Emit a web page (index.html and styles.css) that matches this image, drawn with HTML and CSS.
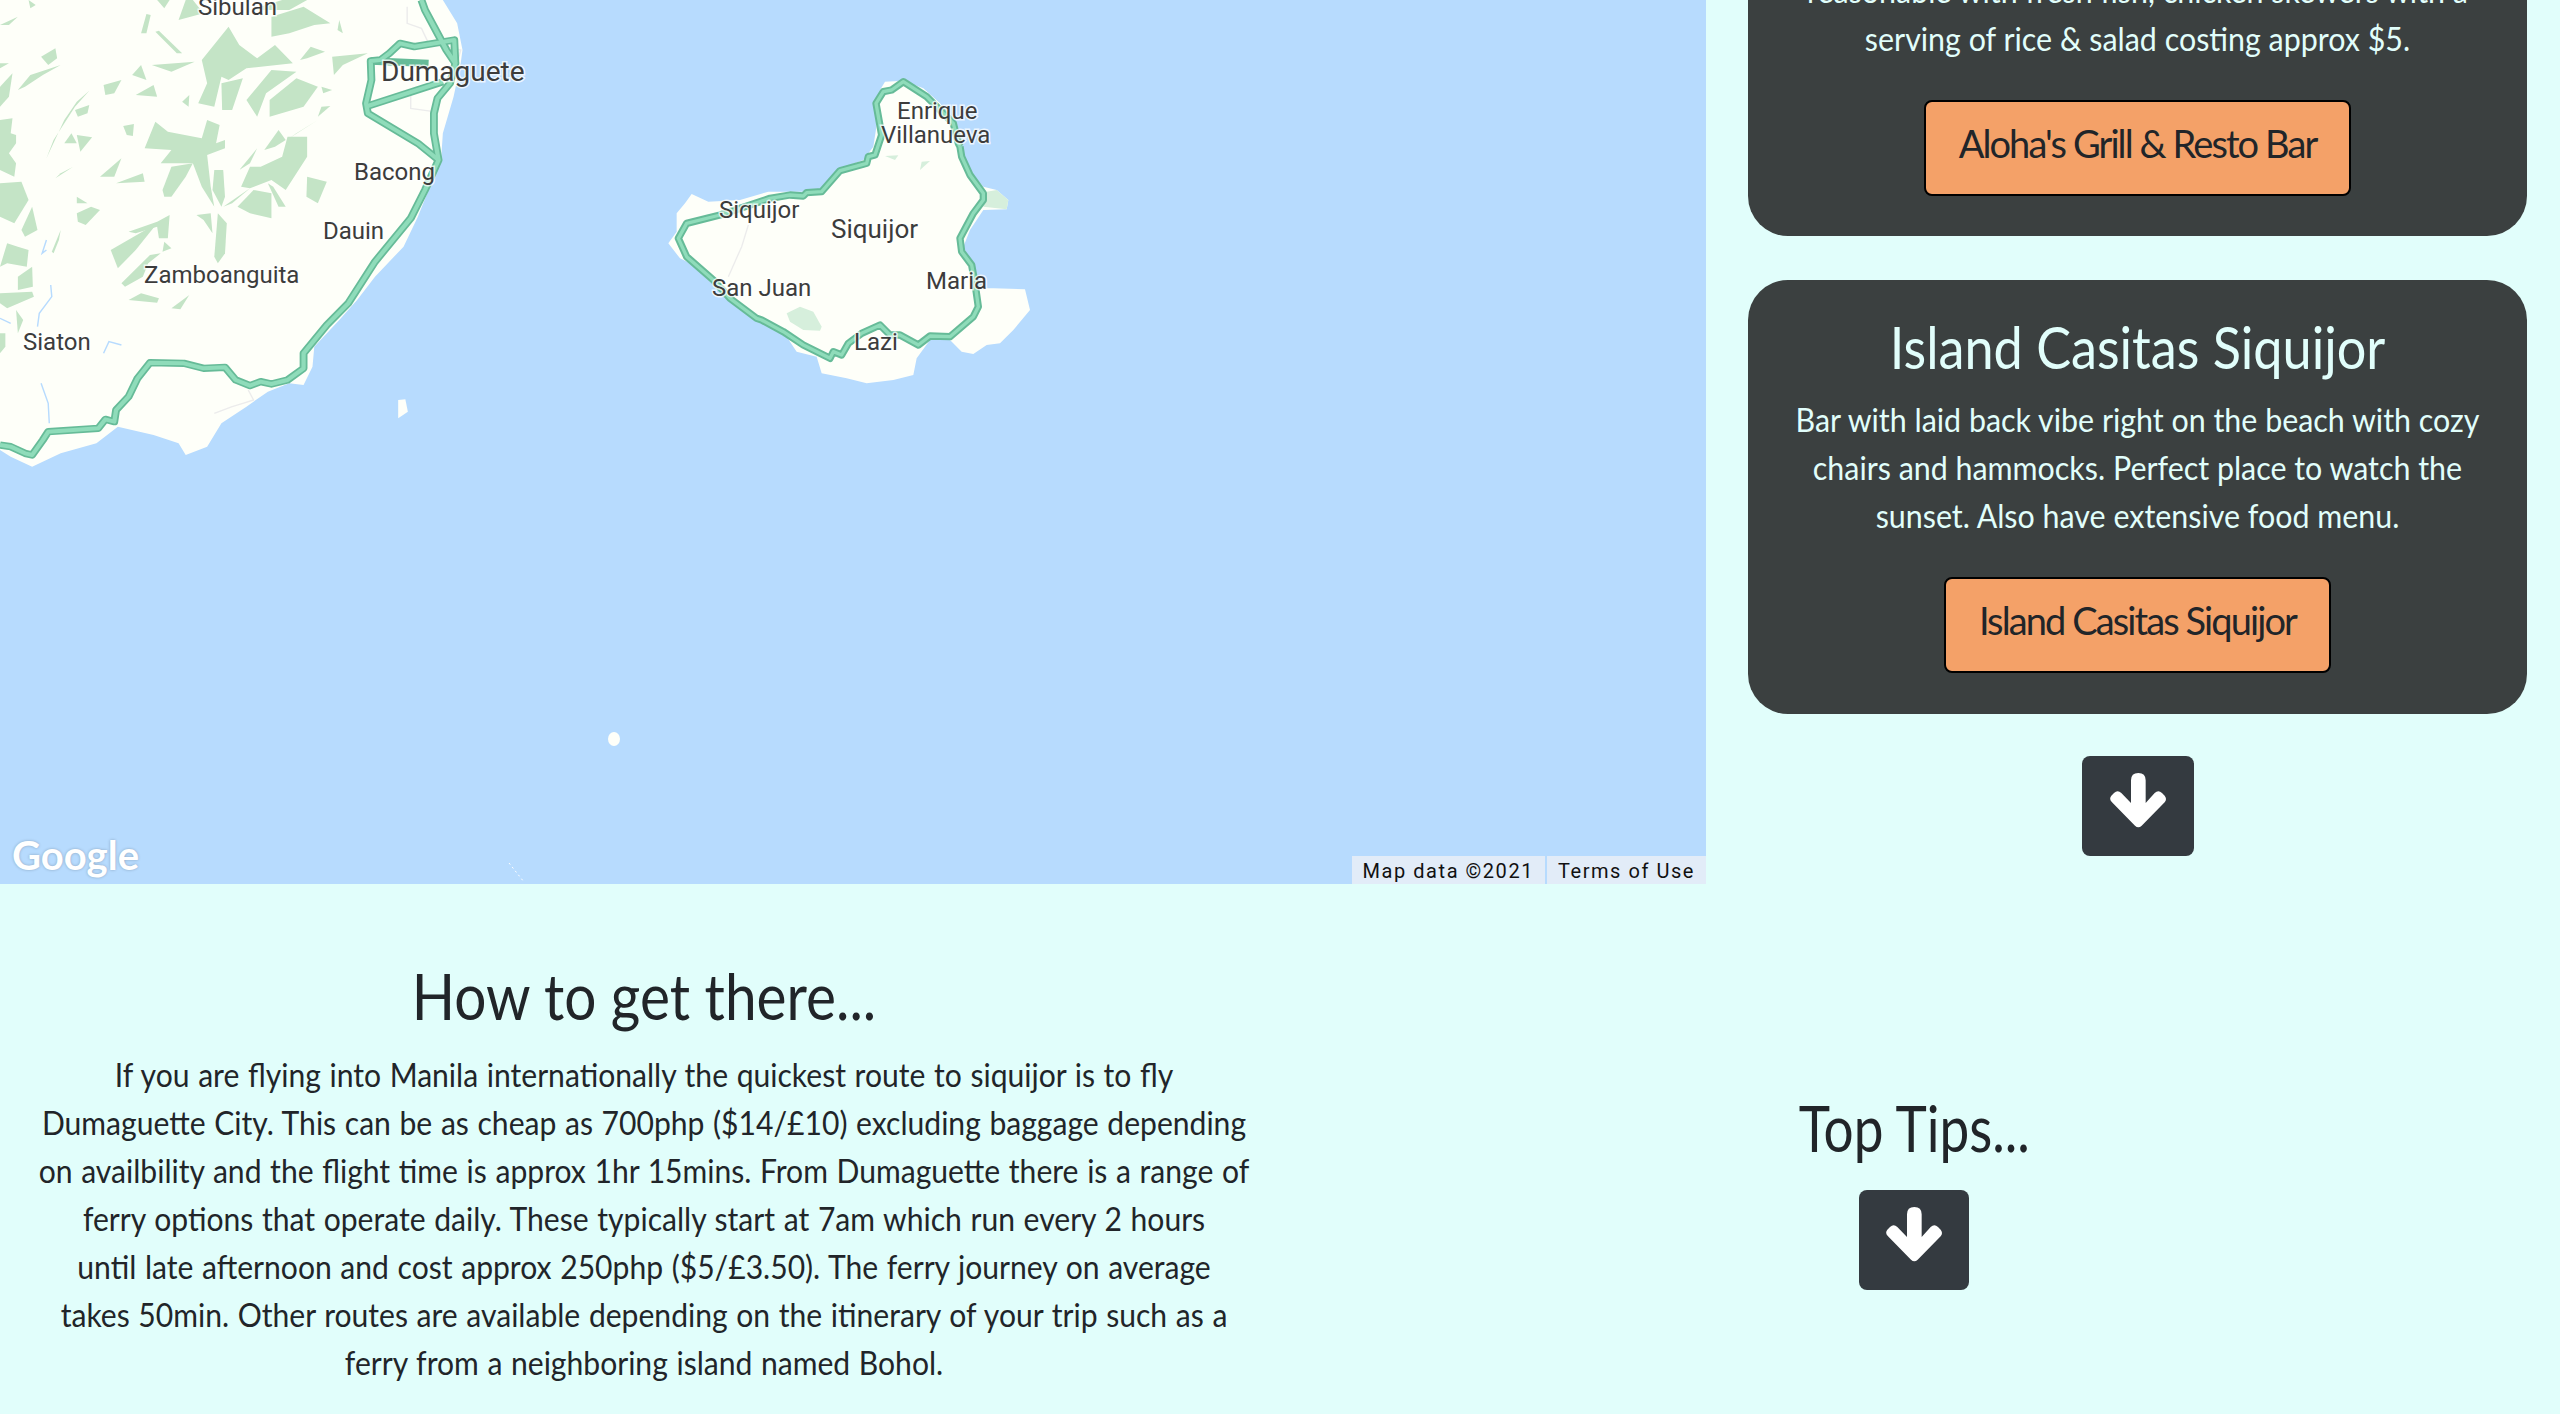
FILE: index.html
```html
<!DOCTYPE html>
<html lang="en">
<head>
    <meta charset="UTF-8">
    <meta name="viewport" content="width=device-width, initial-scale=1.0">
    <title>Siquijor</title>
    <link rel="stylesheet" href="styles.css">
</head>
<body>
    <div class="page">
        <div class="top-row">
            <div class="map">
                <svg class="map-svg" width="1706" height="884" viewBox="0 0 1706 884">
                    <rect width="1706" height="884" fill="#b7dbfe"/>
                    <!-- negros coast -->
                    <g transform="scale(0.35714 0.33333)">
                        <polygon class="land" points="0,0 1240,0 1280,70 1295,150 1290,190 1270,290 1240,400 1235,480 1200,570 1170,650 1130,740 1050,830 1000,900 950,960 880,1040 875,1100 850,1155 810,1150 750,1175 690,1220 620,1270 580,1340 520,1365 500,1330 550,1295 500,1330 430,1305 330,1280 270,1330 170,1360 90,1400 30,1370 0,1350"/>
                        <polygon class="land" points="1115,1200 1135,1198 1142,1235 1115,1255"/>
                        <g class="forest">
                            <polygon points="395,100 410,42 422,45 410,100"/>
                            <polygon points="115,170 155,145 160,175 135,195"/>
                            <polygon points="50,270 85,225 170,195 120,225 70,260"/>
                            <polygon points="435,95 445,92 510,160 495,160"/>
                            <polygon points="0,75 50,50 25,75"/>
                            <polygon points="80,0 100,15 85,25"/>
                            <polygon points="440,0 475,0 460,25"/>
                            <polygon points="500,60 520,0 540,0 570,40"/>
                            <polygon points="700,30 790,0 860,0 810,30"/>
                            <polygon points="760,50 850,20 925,70 880,75 810,100 760,110"/>
                            <polygon points="565,180 640,80 670,135 720,175 770,135 820,190 690,205 640,240 620,230 600,320 555,310 580,250"/>
                            <polygon points="840,180 870,140 910,155 860,175"/>
                            <polygon points="950,60 960,100 945,90"/>
                            <polygon points="930,170 1030,160 960,195 935,225"/>
                            <polygon points="290,255 340,240 320,280 295,285"/>
                            <polygon points="370,225 395,195 410,240"/>
                            <polygon points="380,285 430,255 440,290"/>
                            <polygon points="425,195 545,185 480,215"/>
                            <polygon points="510,305 530,285 528,320"/>
                            <polygon points="620,250 680,235 650,330 622,330"/>
                            <polygon points="690,300 760,210 830,215 745,280 720,350"/>
                            <polygon points="755,300 830,235 890,260 850,320 755,350"/>
                            <polygon points="900,260 930,270 905,280"/>
                            <polygon points="890,350 925,318 900,320"/>
                            <polygon points="345,378 375,372 372,408 355,405"/>
                            <polygon points="130,475 180,360 215,305 250,272 210,320 150,420"/>
                            <polygon points="210,330 250,315 245,340 218,350"/>
                            <polygon points="180,430 200,400 215,430"/>
                            <polygon points="215,405 258,412 225,455"/>
                            <polygon points="405,445 435,365 470,395 565,415 580,360 615,375 605,430 630,420 630,445 580,465 590,560 600,620 565,560 540,490 450,490 480,450"/>
                            <polygon points="455,570 480,500 540,490 520,530 480,590 460,590"/>
                            <polygon points="280,530 340,475 320,530"/>
                            <polygon points="155,535 205,500 170,520"/>
                            <polygon points="325,550 400,520 405,545"/>
                            <polygon points="805,410 860,410 860,470 800,570 760,540 700,565 675,560 700,500 730,500 790,470"/>
                            <polygon points="740,450 780,390 800,420 770,440"/>
                            <polygon points="810,415 890,360 830,400"/>
                            <polygon points="670,510 720,445 700,490"/>
                            <polygon points="860,530 915,545 890,610 858,590"/>
                            <polygon points="665,620 710,570 760,580 760,655 700,640"/>
                            <polygon points="765,560 800,620 780,620 750,550"/>
                            <polygon points="600,510 625,510 630,590 620,620 595,570"/>
                            <polygon points="625,620 700,565 650,610"/>
                            <polygon points="550,645 590,640 595,700 570,660"/>
                            <polygon points="610,640 635,670 630,760 610,790 600,770"/>
                            <polygon points="215,590 245,610 215,610"/>
                            <polygon points="215,640 255,620 280,630 240,675 218,665"/>
                            <polygon points="360,695 440,665 475,645 470,715 445,715 440,680 380,700"/>
                            <polygon points="310,750 440,670 380,750 330,805"/>
                            <polygon points="145,755 170,690 165,720 150,760"/>
                            <polygon points="340,850 420,765 450,760 415,790 400,830 350,860"/>
                            <polygon points="455,755 460,725 480,745"/>
                            <polygon points="360,900 395,880 445,895 440,908"/>
                            <polygon points="480,925 530,885 505,928"/>
                            <polygon points="0,360 35,355 30,400 45,405 45,430 25,460 45,490 40,530 0,510"/>
                            <polygon points="0,550 60,545 80,600 40,670 0,650"/>
                            <polygon points="60,690 90,620 105,690 70,710"/>
                            <polygon points="0,800 20,730 50,740 80,750 75,800 20,790"/>
                            <polygon points="50,830 90,800 92,860 50,870"/>
                            <polygon points="0,880 90,875 95,890 20,925 0,910"/>
                            <polygon points="45,930 65,960 50,1000"/>
                            <polygon points="0,190 25,190 0,205"/>
                            <polygon points="0,260 35,220 25,290 0,320"/>
                            <polygon points="0,1000 15,1000 15,1040 0,1060"/>
                        </g>
                        <polyline class="river" points="130,720 118,760 130,750"/>
                        <polyline class="river" points="142,855 145,890 110,940 105,980"/>
                        <polyline class="river" points="115,1150 135,1210 138,1270"/>
                        <polyline class="river" points="290,1060 305,1025 340,1035"/>
                        <polyline class="river" points="0,955 30,970"/>
                        <polyline class="road" points="1140,20 1140,70 1180,85 1200,130 1290,150 1280,190"/>
                        <polyline class="road" points="1150,270 1150,325 1215,335"/>
                        <polyline class="road" points="600,1240 650,1220 680,1210 710,1200 695,1170"/>
                        <polyline class="route-edge" points="1180,0 1190,30 1250,150 1275,190 1260,250 1225,295 1215,340 1215,400 1228,480 1190,570 1150,655 1050,785 975,910 915,975 850,1060 850,1105 805,1140 760,1152 730,1145 700,1157 660,1140 630,1102 570,1105 515,1090 420,1088 385,1135 360,1190 325,1230 320,1265 295,1258 275,1285 135,1295 120,1320 90,1365 70,1360 30,1340 0,1335"/>
                        <polyline class="route-edge" points="1275,190 1272,120 1160,140 1120,130 1090,160 1065,180 1038,183 1040,240 1025,310 1030,340 1170,430 1228,480"/>
                        <polyline class="route-edge" points="1030,318 1240,245"/>
                        <polyline class="route-edge" points="1038,183 1200,190"/>
                        <polyline class="route-core" points="1180,0 1190,30 1250,150 1275,190 1260,250 1225,295 1215,340 1215,400 1228,480 1190,570 1150,655 1050,785 975,910 915,975 850,1060 850,1105 805,1140 760,1152 730,1145 700,1157 660,1140 630,1102 570,1105 515,1090 420,1088 385,1135 360,1190 325,1230 320,1265 295,1258 275,1285 135,1295 120,1320 90,1365 70,1360 30,1340 0,1335"/>
                        <polyline class="route-core" points="1275,190 1272,120 1160,140 1120,130 1090,160 1065,180 1038,183 1040,240 1025,310 1030,340 1170,430 1228,480"/>
                        <polyline class="route-core" points="1030,318 1240,245"/>
                    </g>
                    <!-- siquijor island -->
                    <g transform="translate(640 50) scale(0.33333)">
                        <polygon class="land" points="735,95 790,92 850,115 900,160 945,220 955,290 985,360 1030,410 1070,420 1105,450 1100,478 1030,480 990,540 970,590 1000,650 1010,715 1060,715 1155,718 1170,780 1120,840 1080,880 1040,885 1000,912 965,905 930,870 870,870 830,925 820,975 760,990 680,1000 620,985 545,970 530,920 470,905 440,860 360,815 270,750 150,640 120,625 85,580 110,545 110,490 135,460 155,432 205,455 300,450 385,425 540,425 590,360 670,330 700,290 720,160 720,120"/>
                        <g class="forest-light">
                            <polygon points="440,790 480,770 520,785 545,830 540,842 490,840 450,815"/>
                            <polygon points="1030,470 1040,425 1070,420 1105,450 1100,478"/>
                            <polygon points="735,318 775,316 765,330"/>
                            <polygon points="840,360 845,335 870,333"/>
                        </g>
                        <polyline class="road" points="325,525 305,590 265,680"/>
                        <polyline class="route-edge thin" points="960,290 965,320 990,375 1030,430 1030,450 1000,490 960,565 965,605 995,645 1005,700 1015,770 1000,800 930,860 870,858 835,885 780,855 750,855 720,825 665,850 625,880 605,915 580,905 570,925 490,885 430,845 365,810 350,805 270,745 220,690 140,620 115,565 140,520 240,495 390,445 450,435 490,438 500,428 545,425 600,362 680,340 685,320 705,315 725,255 708,160 730,125 755,120 790,95 860,140 940,220 955,280 960,290"/>
                        <polyline class="route-core thin" points="960,290 965,320 990,375 1030,430 1030,450 1000,490 960,565 965,605 995,645 1005,700 1015,770 1000,800 930,860 870,858 835,885 780,855 750,855 720,825 665,850 625,880 605,915 580,905 570,925 490,885 430,845 365,810 350,805 270,745 220,690 140,620 115,565 140,520 240,495 390,445 450,435 490,438 500,428 545,425 600,362 680,340 685,320 705,315 725,255 708,160 730,125 755,120 790,95 860,140 940,220 955,280 960,290"/>
                    </g>
                    <ellipse class="land" cx="614" cy="739" rx="6" ry="7"/>
                    <polyline class="dots" points="509,863 524,882"/>
                    <text class="place" x="198" y="15">Sibulan</text>
                    <text class="place big" x="381" y="81">Dumaguete</text>
                    <text class="place" x="354" y="180">Bacong</text>
                    <text class="place" x="323" y="239">Dauin</text>
                    <text class="place" x="144" y="283">Zamboanguita</text>
                    <text class="place" x="23" y="350">Siaton</text>
                    <text class="place" x="897" y="119">Enrique</text>
                    <text class="place" x="881" y="143">Villanueva</text>
                    <text class="place" x="719" y="218">Siquijor</text>
                    <text class="place mid" x="831" y="238">Siquijor</text>
                    <text class="place" x="712" y="296">San Juan</text>
                    <text class="place" x="926" y="289">Maria</text>
                    <text class="place" x="854" y="350">Lazi</text>
                </svg>
                <div class="map-logo">Google</div>
                <div class="map-credits">
                    <span class="credit">Map data ©2021</span>
                    <span class="credit">Terms of Use</span>
                </div>
            </div>
            <div class="side">
                <div class="card card-cut">
                    <p class="card-text">reasonable with fresh fish, chicken skewers with a<br>serving of rice &amp; salad costing approx $5.</p>
                    <a class="btn-orange" href="#">Aloha's Grill &amp; Resto Bar</a>
                </div>
                <div class="card">
                    <h3 class="card-title">Island Casitas Siquijor</h3>
                    <p class="card-text">Bar with laid back vibe right on the beach with cozy<br>chairs and hammocks. Perfect place to watch the<br>sunset. Also have extensive food menu.</p>
                    <a class="btn-orange" href="#">Island Casitas Siquijor</a>
                </div>
                <a class="btn-down btn-side" href="#">
                    <svg class="arrow" viewBox="0 0 168 165"><path d="M63 90V22Q63 0 85 0Q107 0 107 22V90L134 60Q145 50 156 60L164 68Q172 78 164 88L95 158Q85 168 75 158L6 88Q-4 78 4 68L12 60Q23 50 34 60Z"/></svg>
                </a>
            </div>
        </div>
        <div class="bottom-row">
            <div class="travel">
                <h2 class="section-title">How to get there...</h2>
                <p class="travel-text">If you are flying into Manila internationally the quickest route to siquijor is to fly<br>Dumaguette City. This can be as cheap as 700php ($14/£10) excluding baggage depending<br>on availbility and the flight time is approx 1hr 15mins. From Dumaguette there is a range of<br>ferry options that operate daily. These typically start at 7am which run every 2 hours<br>until late afternoon and cost approx 250php ($5/£3.50). The ferry journey on average<br>takes 50min. Other routes are available depending on the itinerary of your trip such as a<br>ferry from a neighboring island named Bohol.</p>
            </div>
            <div class="tips">
                <h2 class="section-title tips-title">Top Tips...</h2>
                <a class="btn-down" href="#">
                    <svg class="arrow" viewBox="0 0 168 165"><path d="M63 90V22Q63 0 85 0Q107 0 107 22V90L134 60Q145 50 156 60L164 68Q172 78 164 88L95 158Q85 168 75 158L6 88Q-4 78 4 68L12 60Q23 50 34 60Z"/></svg>
                </a>
            </div>
        </div>
    </div>
</body>
</html>
```

FILE: styles.css
```css
body {
    margin: 0;
    background: #e1fefb;
    color: #212529;
    font-family: 'Lato', sans-serif;
    overflow: hidden;
}

.page {
    height: 1414px;
    overflow: hidden;
}

.top-row {
    display: grid;
    grid-template-columns: 1706px 1fr;
    height: 884px;
}

/* map */
.map {
    position: relative;
    height: 884px;
    overflow: hidden;
}

.map-svg {
    display: block;
}

.land {
    fill: #fefff9;
}

.forest polygon {
    fill: #c4e4c6;
}

.forest-light polygon {
    fill: #d6efdc;
}

.river {
    fill: none;
    stroke: #b7dbfe;
    stroke-width: 4;
}

.road {
    fill: none;
    stroke: #ececec;
    stroke-width: 4;
}

.route-edge {
    fill: none;
    stroke: #66bb98;
    stroke-width: 22;
    stroke-linejoin: round;
}

.route-core {
    fill: none;
    stroke: #8fdcba;
    stroke-width: 12;
    stroke-linejoin: round;
}

.route-edge.thin {
    stroke-width: 22;
}

.route-core.thin {
    stroke-width: 10;
}

.dots {
    fill: none;
    stroke: #ffffff;
    stroke-width: 1;
    stroke-dasharray: 2 3;
}

.place {
    font-family: 'Roboto', sans-serif;
    font-size: 24px;
    fill: #3c3c3c;
    stroke: rgba(255, 255, 255, 0.75);
    stroke-width: 3px;
    paint-order: stroke;
}

.place.big {
    font-size: 28px;
}

.place.mid {
    font-size: 26px;
}

.map-logo {
    position: absolute;
    left: 12px;
    top: 830px;
    font-size: 40px;
    font-weight: 700;
    line-height: 50px;
    color: #ffffff;
    text-shadow: 0 0 3px rgba(0, 0, 0, 0.25);
}

.map-credits {
    position: absolute;
    right: 0;
    bottom: 0;
    display: flex;
    gap: 2px;
}

.credit {
    height: 28px;
    line-height: 31px;
    padding: 0 11px;
    background: #e2ecf8;
    color: #111111;
    font-family: 'Roboto', sans-serif;
    font-size: 20px;
    letter-spacing: 1.55px;
}

/* right column */
.side {
    padding: 0 33px 0 42px;
    display: flex;
    flex-direction: column;
    align-items: center;
}

.card {
    width: 100%;
    box-sizing: border-box;
    height: 434px;
    margin-bottom: 42px;
    padding: 32px 0 0;
    background: #3b4040;
    border-radius: 40px;
    color: #e1fefb;
    text-align: center;
}

.card-cut {
    height: 280px;
    margin-top: -44px;
    margin-bottom: 44px;
    padding-top: 11px;
}

/* the site's hand lettered font is narrow, Lato gets squeezed to fit */
.card-title {
    margin: 0 0 14px;
    font-size: 58px;
    line-height: 70px;
    font-weight: 400;
    transform: scaleX(0.9);
}

.card-text {
    margin: 0 0 37px;
    font-size: 32px;
    line-height: 48px;
    transform: scaleX(0.95);
}

.btn-orange {
    display: inline-block;
    padding: 0 33px;
    height: 92px;
    line-height: 82px;
    background: #f4a168;
    border: 2px solid #000000;
    border-radius: 8px;
    color: #212529;
    font-size: 38px;
    letter-spacing: -1.9px;
    text-decoration: none;
}

.btn-down {
    display: flex;
    justify-content: center;
    align-items: center;
    box-sizing: border-box;
    width: 110px;
    height: 100px;
    padding-bottom: 12px;
    background: #343a40;
    border-radius: 8px;
}

.btn-side {
    width: 112px;
}

.arrow {
    display: block;
    width: 56px;
    height: 55px;
    fill: #ffffff;
}

/* lower sections */
.bottom-row {
    display: grid;
    grid-template-columns: 1288px 1fr;
}

.travel {
    padding-top: 74px;
    text-align: center;
}

.section-title {
    margin: 0 0 17px;
    font-size: 64px;
    line-height: 76px;
    font-weight: 400;
    transform: scaleX(0.887);
}

.travel-text {
    margin: 0;
    font-size: 32px;
    line-height: 48px;
    word-spacing: 1px;
    transform: scaleX(0.94);
}

.tips {
    padding-top: 206px;
    display: flex;
    flex-direction: column;
    align-items: center;
    padding-right: 20px;
}

.tips-title {
    margin-bottom: 24px;
    transform: scaleX(0.83);
}
```
